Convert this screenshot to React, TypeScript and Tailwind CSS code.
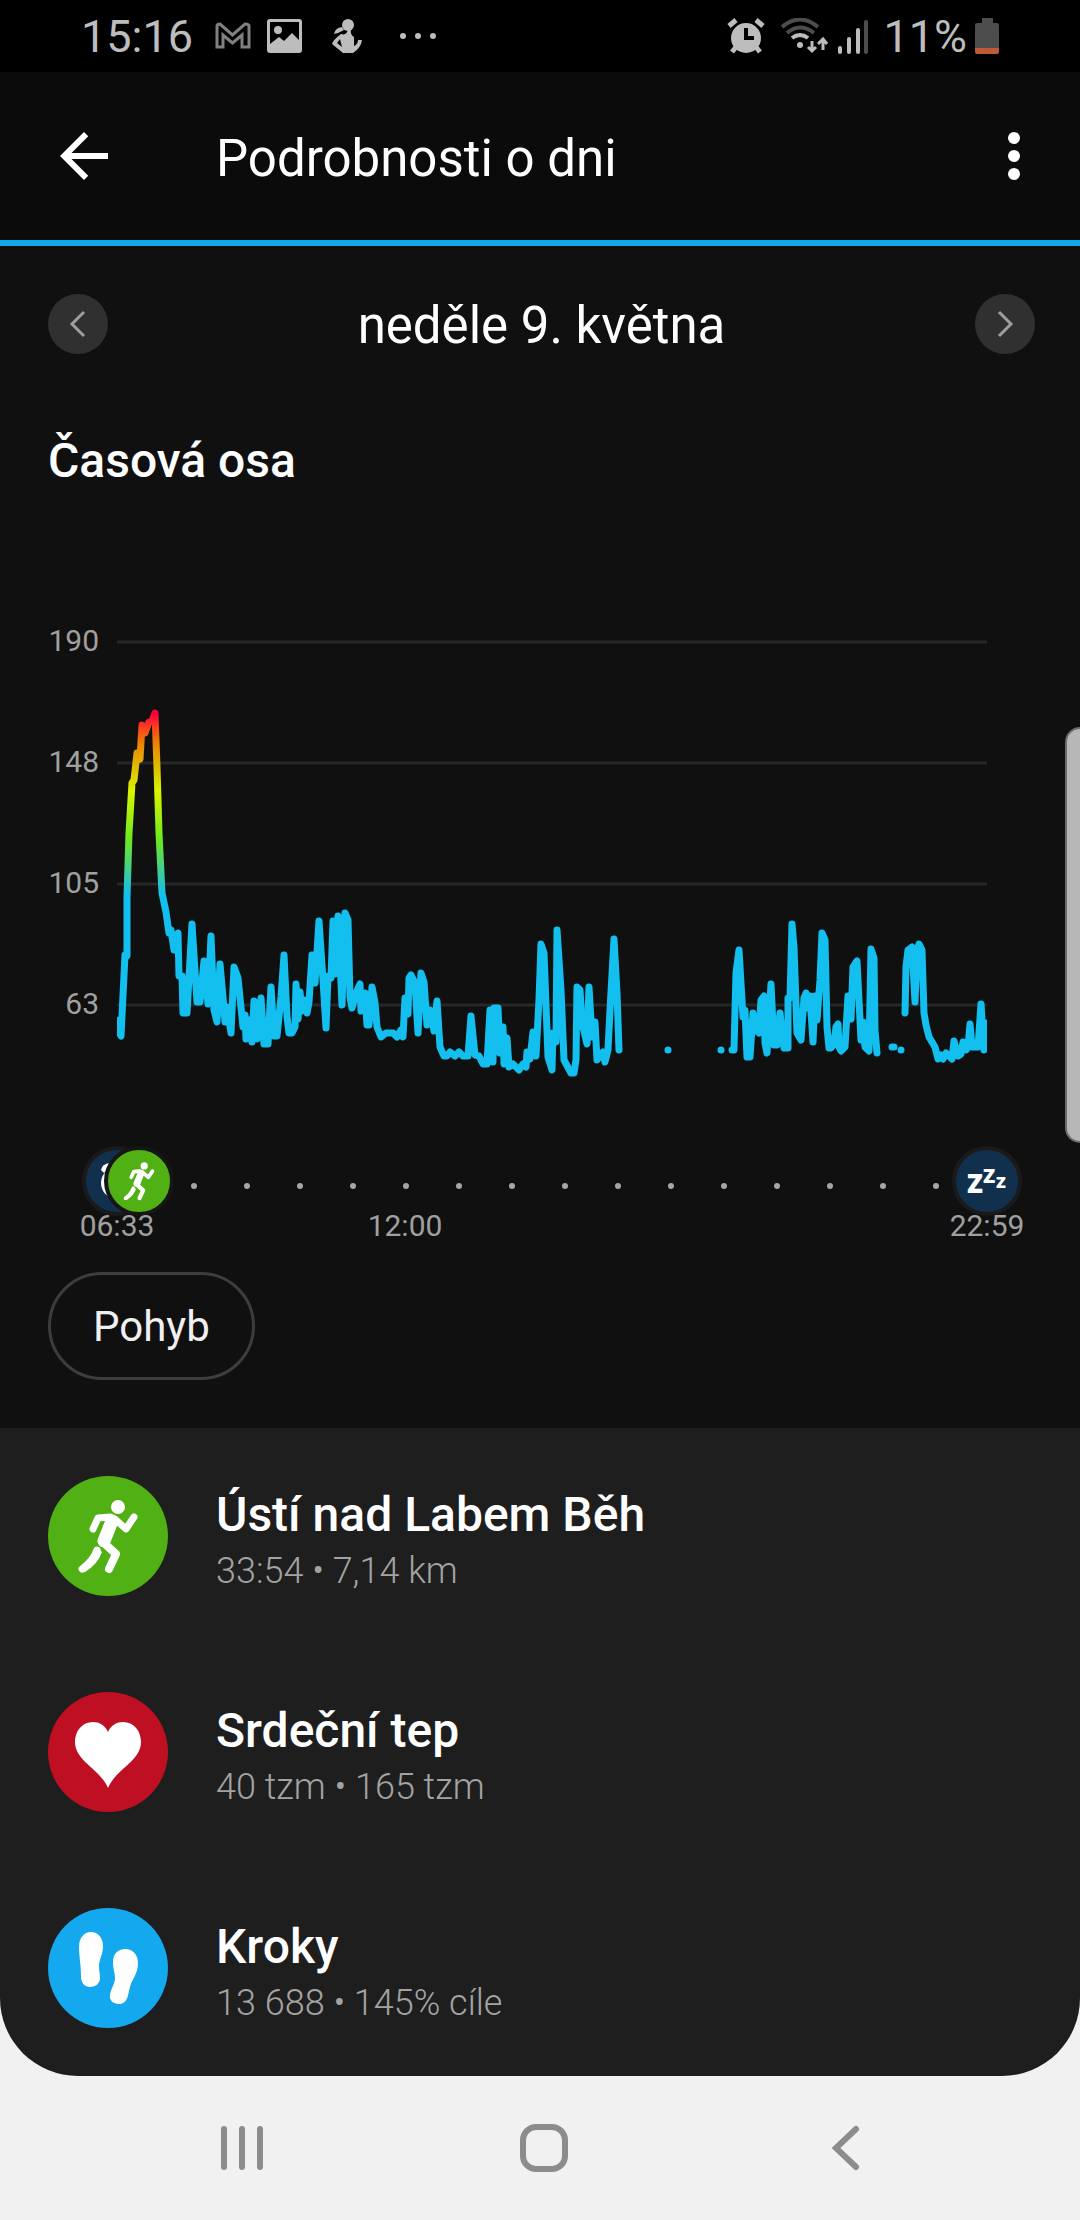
import type { ReactNode } from "react";

type Point = [number, number];

// --- DATA ---
const gridLines = [
  { label: "190", y: 42 },
  { label: "148", y: 163 },
  { label: "105", y: 284 },
  { label: "63", y: 405 },
];

const morning: Point[] = [
  [119, 420], [119, 432], [121, 436], [125, 355], [127, 356], [127, 297], [129, 233], [132, 183],
  [134, 180], [137, 153], [140, 159], [142, 125], [145, 133], [149, 122], [152, 121], [155, 113],
  [157, 167], [159, 233], [162, 293], [166, 312], [169, 333], [171, 330], [174, 350], [178, 333],
  [179, 376], [182, 376], [183, 413], [187, 413], [192, 324], [197, 402], [200, 402], [204, 361],
  [208, 404], [211, 336], [214, 410], [217, 422], [220, 364], [223, 397], [225, 422], [227, 407],
  [231, 433], [234, 367], [238, 378], [243, 427], [245, 415], [246, 439], [249, 420], [252, 442],
  [254, 401], [257, 439], [261, 398], [264, 444], [268, 444], [271, 387], [274, 436], [277, 436],
  [281, 397], [284, 355], [287, 417], [289, 433], [292, 433], [295, 427], [296, 384], [298, 419],
  [300, 392], [302, 411], [304, 400], [307, 413], [309, 402], [312, 355], [315, 383], [319, 321],
  [323, 380], [326, 428], [328, 376], [331, 378], [333, 321], [335, 374], [338, 316], [342, 405],
  [345, 313], [348, 320], [350, 397], [352, 408], [356, 393], [360, 384], [361, 411], [365, 393],
  [367, 425], [369, 425], [372, 387], [375, 403], [377, 427], [381, 437], [386, 433], [393, 433],
  [397, 437], [401, 430], [403, 437], [405, 398], [408, 414], [409, 378], [411, 375], [415, 383],
  [418, 433], [421, 373], [424, 382], [427, 425], [430, 410], [434, 431], [437, 401], [440, 447],
  [444, 456], [447, 456], [450, 452], [455, 456], [459, 452], [463, 456], [468, 456], [471, 416],
  [475, 455], [479, 456], [483, 464], [487, 464], [490, 410], [493, 462], [494, 408], [498, 408],
  [500, 453], [503, 427], [504, 464], [507, 438], [509, 467], [513, 464], [519, 470], [523, 464],
  [526, 467], [527, 452], [530, 459], [533, 432], [536, 456], [539, 400], [541, 344], [544, 353],
  [548, 457], [552, 470], [553, 433], [556, 442], [557, 330], [561, 390], [564, 460], [571, 473],
  [574, 473], [576, 460], [577, 387], [580, 390], [582, 423], [587, 444], [589, 387], [592, 437],
  [595, 422], [597, 460], [603, 452], [605, 462], [608, 450], [610, 410], [614, 339], [617, 393],
  [619, 450],
];

const afternoon: Point[] = [
  [732, 450], [734, 450], [736, 373], [739, 350], [743, 417], [745, 410], [747, 457], [750, 457],
  [753, 413], [756, 430], [759, 433], [761, 400], [764, 396], [765, 443], [767, 453], [771, 384],
  [774, 445], [777, 445], [780, 413], [784, 448], [788, 448], [788, 398], [790, 398], [792, 324],
  [794, 347], [797, 433], [801, 440], [804, 398], [806, 393], [808, 408], [810, 396], [813, 442],
  [815, 396], [817, 420], [820, 380], [822, 333], [825, 340], [827, 427], [829, 448], [831, 448],
  [834, 444], [836, 427], [838, 424], [839, 447], [841, 451], [845, 447], [848, 396], [851, 419],
  [853, 367], [857, 361], [861, 440], [863, 422], [865, 447], [869, 451], [871, 349], [874, 358],
  [875, 430], [877, 453],
];

const evening: Point[] = [
  [905, 413], [906, 367], [908, 350], [912, 347], [915, 402], [917, 350], [919, 344], [922, 350],
  [924, 413], [926, 425], [929, 437], [932, 442], [935, 447], [938, 459], [941, 455], [943, 459],
  [946, 453], [949, 456], [952, 459], [954, 441], [958, 456], [961, 454], [963, 442], [966, 450],
  [968, 447], [970, 424], [972, 447], [978, 447], [981, 404], [984, 450], [987, 423],
];

const segments: Point[][] = [
  morning,
  [[668, 450], [668, 450]],
  [[721, 450], [721, 450]],
  afternoon,
  [[892, 447], [894, 447]],
  [[901, 450], [901, 450]],
  evening,
];

const toPath = (points: Point[]) => "M" + points.map((p) => p.join(" ")).join("L");

// --- ICONS ---
function Runner() {
  return (
    <g fill="none" stroke="#fff" strokeLinecap="round" strokeLinejoin="round">
      <circle cx="70" cy="31" r="7" fill="#fff" stroke="none" />
      <path d="M45 53L50 42L62 41L68 44L78 53L86 41" strokeWidth="7" />
      <path d="M64 45L56 65" strokeWidth="13" />
      <path d="M56 67L68 78L61 93" strokeWidth="8" />
      <path d="M50 71L54 76Q50 88 37 96Q32 97 31 92Q44 83 48 71Z" fill="#fff" stroke="none" />
      <path d="M49 74Q45 85 34 93" strokeWidth="7" />
    </g>
  );
}

function Heart() {
  return (
    <path
      fill="#fff"
      d="M60 40C57 33 51 30 45 30C34 30 27 39 27 50C27 69 52 77 60 96C68 77 93 69 93 50C93 39 86 30 75 30C69 30 63 33 60 40Z"
    />
  );
}

function Footsteps() {
  return (
    <g fill="#fff">
      <path d="M43 24C50 24 55 30 55 38C55 47 51 51 51 58C51 63 52 66 52 70C52 75 48 79 42 79C37 79 33 75 33 69C33 56 31 48 31 39C31 30 36 24 43 24Z" />
      <path d="M77 41C85 41 90 47 90 55C90 66 84 71 82 79C80 86 80 96 71 96C65 96 61 92 62 87C63 80 67 76 67 70C67 65 65 61 65 54C65 46 70 41 77 41Z" />
    </g>
  );
}

function StatusBar() {
  return (
    <div className="flex h-[72px] items-center justify-between bg-black px-[81px] text-[45px] leading-[48px] text-[#bdbdbd]">
      <div className="flex items-center">
        <span className="pt-[2px]">15:16</span>
        <svg className="ml-[22px] h-9 w-9" viewBox="0 0 36 36" fill="none" stroke="#808080" strokeWidth="3">
          <path d="M2 8Q2 6 5 6L17.5 17L30 6Q34 6 34 8V29H27V17L17.5 25L8 17V29H2Z" />
        </svg>
        <svg className="ml-4 h-9 w-9" viewBox="0 0 36 36">
          <path
            fill="#bdbdbd"
            fillRule="evenodd"
            d="M3 1H32Q35 1 35 4V32Q35 35 32 35H3Q0 35 0 32V4Q0 1 3 1ZM3 4V26L12 19L17 23L25 15L32 22V4Z"
          />
          <circle cx="11" cy="12" r="4" fill="#bdbdbd" />
        </svg>
        <svg className="ml-[26px] h-9 w-9" viewBox="0 0 36 36" fill="#bdbdbd">
          <circle cx="19" cy="7" r="6" />
          <path d="M13 9Q6 10 5 16Q10 15 15 12Z" />
          <path d="M12 16Q18 18 19 11H22Q21 17 25 19V28Q29 26 29 22L33 22Q32 30 24 35H14L3 26Q4 22 12 16ZM11 21L8 25L13 29Z" fillRule="evenodd" />
        </svg>
        <svg className="ml-[34px] h-9 w-10" viewBox="0 0 40 36" fill="#bdbdbd">
          <circle cx="4" cy="18" r="3" />
          <circle cx="19" cy="18" r="3" />
          <circle cx="34" cy="18" r="3" />
        </svg>
      </div>

      <div className="flex items-center">
        <svg className="h-9 w-[38px]" viewBox="0 0 38 36">
          <circle cx="19" cy="20" r="15" fill="#bdbdbd" />
          <path d="M2 8L9 2M29 2L36 8M9 29L5 34M29 29L33 34" stroke="#bdbdbd" strokeWidth="5" />
          <path d="M19 10V20H27" fill="none" stroke="#000" strokeWidth="4" />
        </svg>
        <svg className="ml-[15px] h-9 w-12" viewBox="0 0 48 36" fill="none" strokeWidth="4">
          <path d="M2 9Q20-6 38 9M7 15Q20 4 34 15" stroke="#4d4d4d" />
          <path d="M12 20Q20 14 28 20" stroke="#bdbdbd" />
          <circle cx="20" cy="27" r="3" fill="#bdbdbd" />
          <path d="M32 23V32M28 29L32 33L36 29M43 32V22M38 26L43 21L47 26" stroke="#bdbdbd" strokeWidth="3" />
        </svg>
        <svg className="ml-[9px] h-9 w-8" viewBox="0 0 32 36" strokeWidth="4" strokeLinecap="round" stroke="#bdbdbd">
          <path d="M3 30V34M12 21V34M21 12V34" />
          <path d="M29 4V34" stroke="#4d4d4d" />
        </svg>
        <span className="ml-[14px] pt-[2px]">11%</span>
        <svg className="ml-2 h-9 w-6" viewBox="0 0 24 36">
          <path d="M7 0H18V5H22Q24 5 24 7V30H0V7Q0 5 2 5H7Z" fill="#4d4d4d" />
          <path d="M0 30H24V34Q24 36 22 36H2Q0 36 0 34Z" fill="#bf5a36" />
        </svg>
      </div>
    </div>
  );
}

function HeartRateChart() {
  return (
    <svg className="mt-[111px] block h-auto w-full" viewBox="0 0 1080 660" role="img" aria-label="Srdeční tep">
      <defs>
        <linearGradient id="zones" gradientUnits="userSpaceOnUse" x1="0" y1="110" x2="0" y2="300">
          <stop offset="0.02" stopColor="#ff0038" />
          <stop offset="0.1" stopColor="#f8481c" />
          <stop offset="0.18" stopColor="#ea8600" />
          <stop offset="0.43" stopColor="#d8f500" />
          <stop offset="0.68" stopColor="#6ce91e" />
          <stop offset="0.83" stopColor="#46cf86" />
          <stop offset="0.97" stopColor="#12bfee" />
        </linearGradient>
        <clipPath id="plot">
          <rect x="117" y="0" width="870" height="500" />
        </clipPath>
      </defs>

      {gridLines.map((line) => (
        <g key={line.label}>
          <path d={`M117 ${line.y}H987`} stroke="#272727" strokeWidth="3" />
          <text x="99" y={line.y + 9} textAnchor="end" fontSize="30" fill="#a0a0a0">
            {line.label}
          </text>
        </g>
      ))}

      <g clipPath="url(#plot)" fill="none" stroke="url(#zones)" strokeWidth="7" strokeLinecap="round" strokeLinejoin="round">
        {segments.map((points, i) => (
          <path key={i} d={toPath(points)} />
        ))}
      </g>

      {Array.from({ length: 15 }, (_, i) => (
        <circle key={i} cx={194 + i * 53} cy="586" r="3" fill="#a6a6a6" />
      ))}

      {/* wake up */}
      <circle cx="117" cy="581" r="33" fill="#10304d" stroke="#1a1a1a" strokeWidth="4" />
      <circle cx="117" cy="583" r="14" fill="none" stroke="#fff" strokeWidth="4" />
      <path d="M101 570Q102 564 110 563V567L104 573Z" fill="#fff" />
      {/* run */}
      <circle cx="139" cy="581" r="33" fill="#50b014" stroke="#161616" strokeWidth="4" />
      <g transform="translate(139 581) scale(0.52) translate(-60 -60)">
        <Runner />
      </g>
      {/* sleep */}
      <circle cx="987" cy="581" r="33" fill="#10304d" stroke="#1a1a1a" strokeWidth="4" />
      <g fill="#fff" fontFamily="Open Sans, sans-serif" fontWeight="800">
        <text x="967" y="593" fontSize="26">Z</text>
        <text x="983" y="583" fontSize="20">Z</text>
        <text x="996" y="588" fontSize="16">Z</text>
      </g>

      <g fill="#a0a0a0" fontSize="30" textAnchor="middle">
        <text x="117" y="636">06:33</text>
        <text x="405" y="636">12:00</text>
        <text x="987" y="636">22:59</text>
      </g>
    </svg>
  );
}

type ActivityProps = { title: string; detail: string; badge: string; children: ReactNode };

function Activity({ title, detail, badge, children }: ActivityProps) {
  return (
    <li className="flex gap-12 px-12 py-12">
      <svg className={`h-[120px] w-[120px] shrink-0 rounded-full ${badge}`} viewBox="0 0 120 120">
        {children}
      </svg>
      <div className="h-[120px] pt-[11px] leading-[56px]">
        <h3 className="text-[48px] font-medium text-white">{title}</h3>
        <p className="text-[36px] font-light text-[#a3a3a3]">{detail}</p>
      </div>
    </li>
  );
}

export default function App() {
  return (
    <div className="relative min-h-screen bg-[#f1f1f1] font-[Roboto,sans-serif]">
      <StatusBar />

      <header className="flex items-center border-b-[6px] border-[#12a8ee] bg-[#0b0b0b] py-12 pr-[30px] pl-12 text-white">
        <button aria-label="Zpět" className="h-[72px] w-[72px]">
          <svg viewBox="0 0 24 24" fill="currentColor">
            <path d="M20 11H7.83l5.59-5.59L12 4l-8 8 8 8 1.41-1.41L7.83 13H20v-2z" />
          </svg>
        </button>
        <h1 className="ml-24 flex-1 pt-[6px] text-[51px] leading-[60px]">Podrobnosti o dni</h1>
        <button aria-label="Další možnosti" className="h-[72px] w-[72px]">
          <svg viewBox="0 0 24 24" fill="currentColor">
            <circle cx="12" cy="6" r="2" />
            <circle cx="12" cy="12" r="2" />
            <circle cx="12" cy="18" r="2" />
          </svg>
        </button>
      </header>

      <main>
        <section className="bg-[#101010] pb-12">
          <div className="flex items-start justify-between pt-12 pr-[45px] pl-12 text-[#9e9e9e]">
            <button aria-label="Předchozí den" className="h-[60px] w-[60px] rounded-full bg-[#303030]">
              <svg viewBox="0 0 60 60" fill="none" stroke="currentColor" strokeWidth="3">
                <path d="M36 18L24 30L36 42" />
              </svg>
            </button>
            <h2 className="text-[51px] leading-[64px] text-white">neděle 9. května</h2>
            <button aria-label="Další den" className="h-[60px] w-[60px] rounded-full bg-[#303030]">
              <svg viewBox="0 0 60 60" fill="none" stroke="currentColor" strokeWidth="3">
                <path d="M24 18L36 30L24 42" />
              </svg>
            </button>
          </div>

          <h2 className="mt-[75px] px-12 text-[48px] leading-[56px] font-medium text-white">Časová osa</h2>

          <HeartRateChart />

          <div className="mt-3 px-12">
            <button className="h-[108px] rounded-full border-[3px] border-[#3d3d3d] px-[42px] text-[42px] text-[#f0f0f0]">
              Pohyb
            </button>
          </div>
        </section>

        <ul className="rounded-b-[78px] bg-[#1e1e1e]">
          <Activity title="Ústí nad Labem Běh" detail="33:54 • 7,14 km" badge="bg-[#50b014]">
            <Runner />
          </Activity>
          <Activity title="Srdeční tep" detail="40 tzm • 165 tzm" badge="bg-[#be1022]">
            <Heart />
          </Activity>
          <Activity title="Kroky" detail="13 688 • 145% cíle" badge="bg-[#14a8ee]">
            <Footsteps />
          </Activity>
        </ul>
      </main>

      <nav className="flex h-36 items-center pr-[83px] pl-[91px] text-[#8c8c8c]">
        <button aria-label="Poslední aplikace" className="flex flex-1 justify-center">
          <svg className="h-12 w-12" viewBox="0 0 48 48" stroke="currentColor" strokeWidth="6" strokeLinecap="round">
            <path d="M6 5V43M24 5V43M42 5V43" />
          </svg>
        </button>
        <button aria-label="Domů" className="flex flex-1 justify-center">
          <svg className="h-12 w-12" viewBox="0 0 48 48" fill="none" stroke="currentColor" strokeWidth="6">
            <rect x="3" y="3" width="42" height="42" rx="13" />
          </svg>
        </button>
        <button aria-label="Zpět v systému" className="flex flex-1 justify-center">
          <svg className="h-12 w-12" viewBox="0 0 48 48" fill="none" stroke="currentColor" strokeWidth="6" strokeLinecap="round">
            <path d="M34 5L14 24L34 43" />
          </svg>
        </button>
      </nav>

      {/* edge panel handle, lies over the page */}
      <div className="absolute top-[727px] right-0 h-[416px] w-[15px] rounded-l-[15px] border-y-2 border-l-2 border-[#6b6b6b] bg-[#b7b7b7]" />
    </div>
  );
}
